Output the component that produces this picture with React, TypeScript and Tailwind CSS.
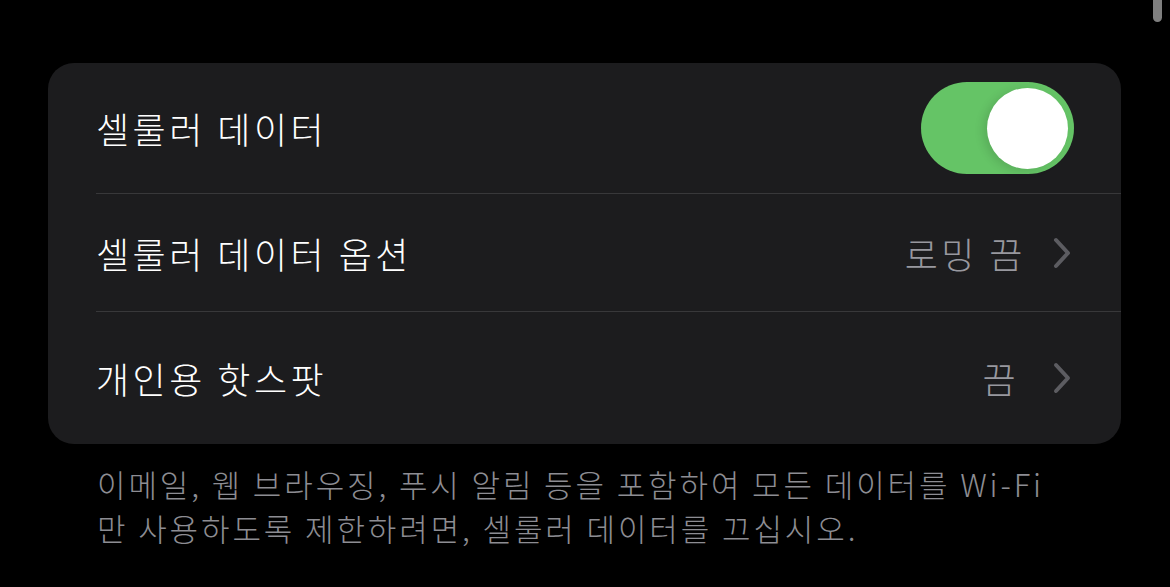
import React from "react";

const Chevron: React.FC = () => (
  <svg width="20" height="32" viewBox="0 0 20 32" className="ml-[26px] shrink-0">
    <path
      d="M4 3 L16 16 L4 29"
      fill="none"
      stroke="#5c5c61"
      strokeWidth="4"
      strokeLinecap="round"
      strokeLinejoin="round"
    />
  </svg>
);

const Toggle: React.FC = () => (
  <div className="flex h-[92px] w-[153px] items-center justify-end rounded-full bg-[#65c466] pr-[6px]">
    <div className="h-[81px] w-[81px] rounded-full bg-white shadow-[-4px_2px_10px_rgba(0,0,0,0.12)]" />
  </div>
);

export default function App() {
  return (
    <div
      className="relative h-[587px] w-[1170px] overflow-hidden bg-black pt-[63px] pl-[48px] font-light"
      style={{ fontFamily: '"Noto Sans CJK KR", "Noto Sans", sans-serif' }}
    >
      <div className="absolute right-[8px] top-0 h-[22px] w-[9px] rounded-b-full bg-[#7f7f7f]" />

      <div className="w-[1073px] overflow-hidden rounded-[26px] bg-[#1c1c1e] pl-[48px]">
        <div className="flex h-[131px] items-center justify-between border-b border-[#38383a] pr-[47px]">
          <span className="text-[36px] tracking-[3.5px] text-white">셀룰러 데이터</span>
          <Toggle />
        </div>
        <div className="flex h-[118px] items-center justify-between border-b border-[#38383a] pr-[49px]">
          <span className="text-[36px] tracking-[3.5px] text-white">셀룰러 데이터 옵션</span>
          <div className="flex items-center">
            <span className="text-[36px] tracking-[3.5px] text-[#98989f]">로밍 끔</span>
            <Chevron />
          </div>
        </div>
        <div className="flex h-[132px] items-center justify-between pr-[49px]">
          <span className="text-[36px] tracking-[3.5px] text-white">개인용 핫스팟</span>
          <div className="flex items-center">
            <span className="mr-[7px] text-[36px] tracking-[3.5px] text-[#98989f]">끔</span>
            <Chevron />
          </div>
        </div>
      </div>

      <p className="mt-[18px] pl-[49px] text-[31px] leading-[44px] tracking-[2.9px] text-[#8d8d93]">
        이메일, 웹 브라우징, 푸시 알림 등을 포함하여 모든 데이터를 Wi-Fi
        <br />
        만 사용하도록 제한하려면, 셀룰러 데이터를 끄십시오.
      </p>
    </div>
  );
}
